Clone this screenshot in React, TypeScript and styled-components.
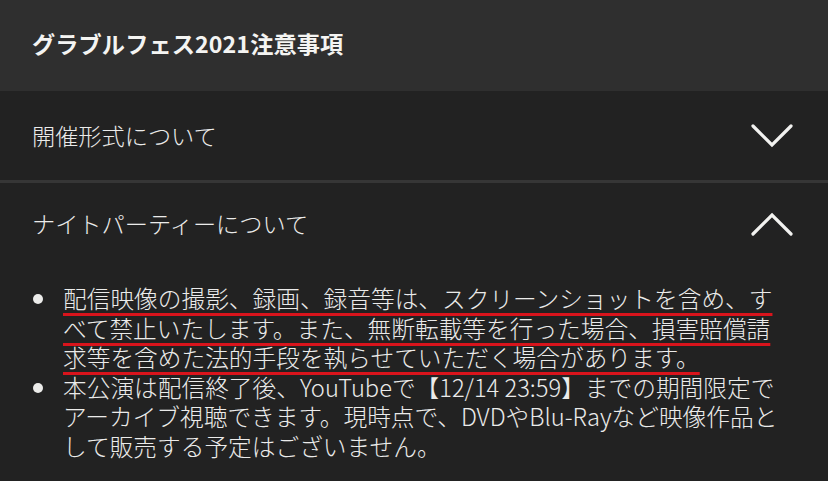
import React from "react";
import styled, { createGlobalStyle } from "styled-components";

const Global = createGlobalStyle`
  html, body { margin: 0; padding: 0; background: #222222; }
  body { font-family: "Noto Sans CJK JP", "Liberation Sans", sans-serif; color: #ececec; }
`;

const Page = styled.div`
  width: 828px;
  height: 481px;
  overflow: hidden;
  background: #222222;
  display: flex;
  flex-direction: column;
`;

const Header = styled.header`
  height: 91px;
  flex: none;
  background: #2f2f2f;
  display: flex;
  align-items: center;
  padding: 0 32px 3px;
  box-sizing: border-box;
`;

const Title = styled.h1`
  margin: 0;
  font-size: 23.2px;
  font-weight: 700;
  color: #f4f4f2;
  letter-spacing: 0.1px;
  line-height: 1;
`;

const Row = styled.div<{ $divider?: boolean; $h: number; $lift?: number }>`
  height: ${(p) => p.$h}px;
  flex: none;
  display: flex;
  align-items: center;
  justify-content: space-between;
  padding: 0 35px ${(p) => p.$lift ?? 0}px 32px;
  box-sizing: border-box;
  border-bottom: ${(p) => (p.$divider ? "3px solid #363636" : "none")};
`;

const Label = styled.span`
  font-size: 23.2px;
  font-weight: 300;
  color: #ebebea;
  line-height: 1;
`;

const Chevron = styled.svg`
  width: 42px;
  height: 26px;
  display: block;
`;

const List = styled.ul`
  list-style: none;
  margin: 0;
  padding: 13px 0 0 33px;
  display: flex;
  flex-direction: column;
`;

const Item = styled.li`
  display: flex;
  align-items: flex-start;
`;

const Dot = styled.span`
  flex: none;
  width: 10px;
  height: 10px;
  border-radius: 50%;
  background: #ececea;
  margin-top: 10px;
  margin-right: 20px;
`;

const Text = styled.p`
  margin: 0;
  width: 728px;
  font-size: 23.7px;
  font-weight: 300;
  line-height: 29.5px;
  color: #ebebea;
  line-break: strict;
`;

const Marked = styled.span`
  text-decoration-line: underline;
  text-decoration-color: #d9141c;
  text-decoration-thickness: 3px;
  text-underline-offset: 5px;
  text-decoration-skip-ink: none;
`;

const Down = () => (
  <Chevron viewBox="0 0 42 26">
    <polyline points="2,3 21,22 40,3" fill="none" stroke="#f2f2f0" strokeWidth="3.2" strokeLinecap="round" strokeLinejoin="miter" />
  </Chevron>
);

const Up = () => (
  <Chevron viewBox="0 0 42 26">
    <polyline points="2,23 21,4 40,23" fill="none" stroke="#f2f2f0" strokeWidth="3.2" strokeLinecap="round" strokeLinejoin="miter" />
  </Chevron>
);

export default function App() {
  return (
    <Page>
      <Global />
      <Header>
        <Title>グラブルフェス2021注意事項</Title>
      </Header>
      <Row $h={92} $divider>
        <Label>開催形式について</Label>
        <Down />
      </Row>
      <Row $h={88} $lift={6}>
        <Label>ナイトパーティーについて</Label>
        <Up />
      </Row>
      <List>
        <Item>
          <Dot />
          <Text>
            <Marked>
              配信映像の撮影、録画、録音等は、スクリーンショットを含め、すべて禁止いたします。また、無断転載等を行った場合、損害賠償請求等を含めた法的手段を執らせていただく場合があります。
            </Marked>
          </Text>
        </Item>
        <Item>
          <Dot />
          <Text>
            本公演は配信終了後、YouTubeで【12/14 23:59】までの期間限定でアーカイブ視聴できます。現時点で、DVDやBlu-Rayなど映像作品として販売する予定はございません。
          </Text>
        </Item>
      </List>
    </Page>
  );
}
